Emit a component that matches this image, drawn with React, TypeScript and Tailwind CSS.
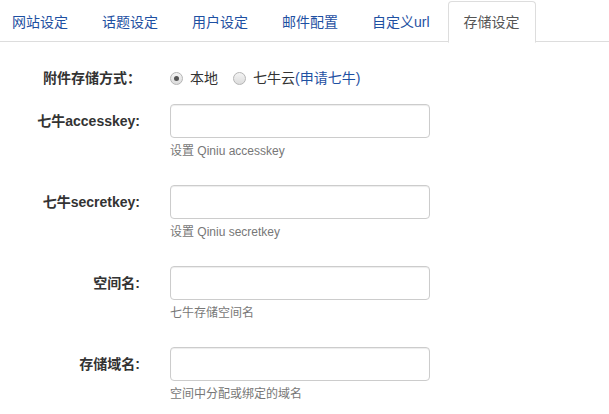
const tabs = ['网站设定', '话题设定', '用户设定', '邮件配置', '自定义url', '存储设定'];

const fields = [
  { label: '七牛accesskey:', help: '设置 Qiniu accesskey' },
  { label: '七牛secretkey:', help: '设置 Qiniu secretkey' },
  { label: '空间名:', help: '七牛存储空间名' },
  { label: '存储域名:', help: '空间中分配或绑定的域名' },
];

function Radio({ checked }: { checked?: boolean }) {
  return (
    <span className="w-[13px] h-[13px] rounded-full border border-[#b5b5b5] bg-gradient-to-b from-[#f4f4f4] to-[#dcdcdc] flex items-center justify-center shrink-0">
      {checked && <span className="w-[5px] h-[5px] rounded-full bg-[#555]"></span>}
    </span>
  );
}

export default function App() {
  return (
    <div
      className="w-[609px] h-[414px] bg-white overflow-hidden text-[14px] text-[#333]"
      style={{ fontFamily: '"Liberation Sans", "Noto Sans CJK SC", sans-serif' }}
    >
      {/* Tabs */}
      <div className="border-b border-[#ddd] h-[42px]">
        <ul className="flex ml-[-4px] pt-[1px]">
          {tabs.map((t) => {
            const active = t === '存储设定';
            return (
              <li key={t} className="mr-[2px]">
                <a
                  className={
                    active
                      ? 'block px-[15px] py-[10px] leading-[20px] border border-[#ddd] border-b-white rounded-t-[4px] bg-white text-[#555]'
                      : 'block px-[15px] py-[10px] leading-[20px] border border-transparent text-[#1e50a2]'
                  }
                >
                  {t}
                </a>
              </li>
            );
          })}
        </ul>
      </div>

      {/* Form */}
      <div className="pt-[26px]">
        <div className="flex items-center mb-[16px] h-[20px]">
          <div className="w-[141px] text-right font-bold leading-[20px]">附件存储方式：</div>
          <div className="pl-[29px] flex items-center">
            <Radio checked />
            <span className="ml-[7px] leading-[20px]">本地</span>
            <span className="ml-[15px]">
              <Radio />
            </span>
            <span className="ml-[7px] leading-[20px]">
              七牛云<a className="text-[#1e50a2]">(申请七牛)</a>
            </span>
          </div>
        </div>

        {fields.map((f) => (
          <div key={f.label} className="flex mb-[15px]">
            <label className="w-[140px] text-right font-bold pt-[7px] leading-[20px]">{f.label}</label>
            <div className="pl-[30px]">
              <input
                type="text"
                className="block w-[260px] h-[34px] border border-[#ccc] rounded-[4px] shadow-[inset_0_1px_1px_rgba(0,0,0,0.075)] px-3 outline-none"
              />
              <p className="mt-[5px] mb-[10px] text-[12px] leading-[17px] text-[#777]">{f.help}</p>
            </div>
          </div>
        ))}
      </div>
    </div>
  );
}
